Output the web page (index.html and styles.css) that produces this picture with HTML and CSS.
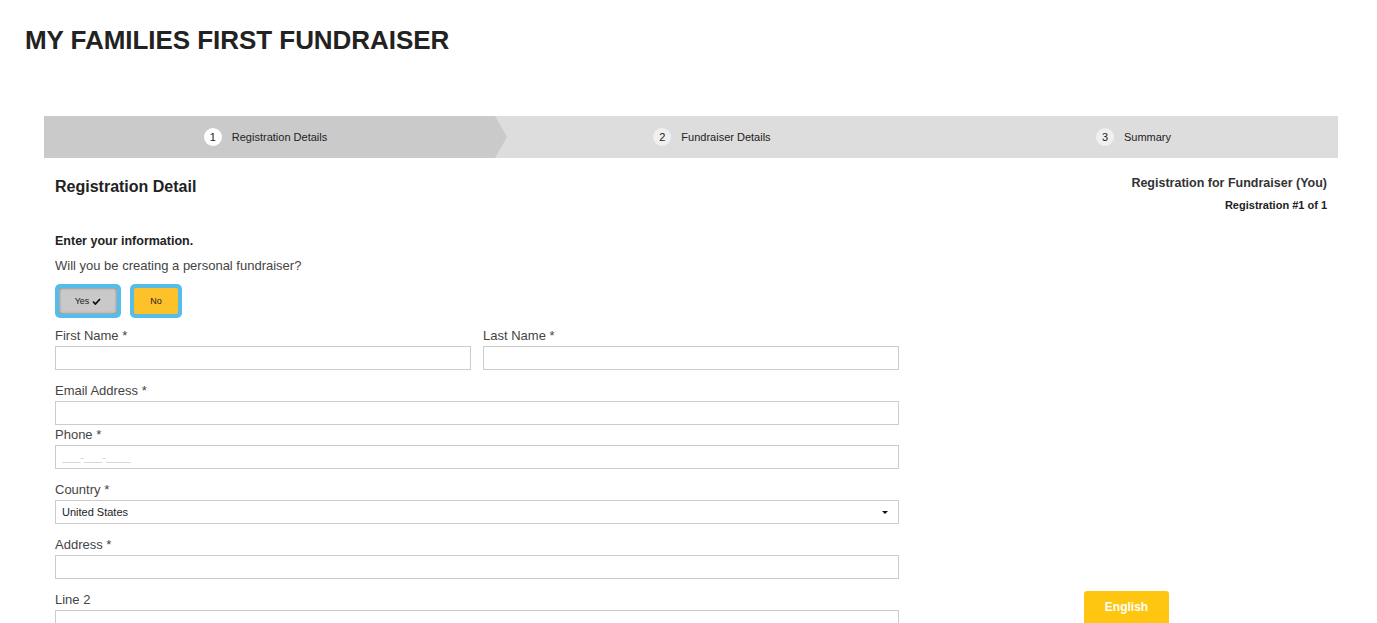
FILE: index.html
```html
<!DOCTYPE html>
<html lang="en">
<head>
    <meta charset="UTF-8">
    <meta name="viewport" content="width=device-width, initial-scale=1.0">
    <title>My Families First Fundraiser</title>
    <link rel="stylesheet" href="styles.css">
</head>
<body>
    <h1 class="page-title">MY FAMILIES FIRST FUNDRAISER</h1>

    <div class="wizard">
        <div class="steps">
            <div class="step active"><span class="step-num">1</span>Registration Details</div>
            <div class="step"><span class="step-num">2</span>Fundraiser Details</div>
            <div class="step"><span class="step-num">3</span>Summary</div>
        </div>

        <div class="panel">
            <div class="panel-head">
                <h2>Registration Detail</h2>
                <div class="reg-info">
                    <div class="reg-for">Registration for Fundraiser (You)</div>
                    <div class="reg-count">Registration #1 of 1</div>
                </div>
            </div>

            <div class="form">
                <div class="intro">Enter your information.</div>
                <div class="question">Will you be creating a personal fundraiser?</div>
                <div class="choice">
                    <button type="button" class="choice-btn yes"><span>Yes <svg width="9" height="7" viewBox="0 0 9 7"><path d="M1 3.5 L3.4 6 L8 1" fill="none" stroke="#111" stroke-width="1.8"/></svg></span></button>
                    <button type="button" class="choice-btn no"><span>No</span></button>
                </div>

                <div class="row">
                    <div class="field">
                        <label>First Name *</label>
                        <input type="text">
                    </div>
                    <div class="field">
                        <label>Last Name *</label>
                        <input type="text">
                    </div>
                </div>
                <div class="field tight">
                    <label>Email Address *</label>
                    <input type="text">
                </div>
                <div class="field">
                    <label>Phone *</label>
                    <input type="text" placeholder="___-___-____">
                </div>
                <div class="field">
                    <label>Country *</label>
                    <div class="select">United States<span class="caret"></span></div>
                </div>
                <div class="field">
                    <label>Address *</label>
                    <input type="text">
                </div>
                <div class="field">
                    <label>Line 2</label>
                    <input type="text">
                </div>
            </div>
        </div>
    </div>

    <button class="lang-btn">English</button>
</body>
</html>
```

FILE: styles.css
```css
body {
    font-family: 'Liberation Sans', Arial, sans-serif;
    margin: 0;
    padding: 0;
    background-color: #ffffff;
    color: #333333;
}
.page-title {
    font-size: 26px;
    font-weight: bold;
    color: #222222;
    margin: 0;
    padding: 25px 0 0 25px;
    line-height: 30px;
    letter-spacing: -0.05px;
}
.wizard {
    margin: 61px 39px 0 44px;
}
.steps {
    display: grid;
    grid-template-columns: 451px 434px 1fr;
    height: 42px;
    background-color: #dddddd;
    font-size: 11px;
    color: #222222;
}
.step {
    display: flex;
    align-items: center;
    justify-content: center;
    padding-bottom: 1px;
}
.step.active {
    position: relative;
    background-color: #cacaca;
    padding-right: 8px;
}
.step.active::after {
    content: "";
    position: absolute;
    top: 0;
    right: -12px;
    border-top: 21px solid transparent;
    border-bottom: 21px solid transparent;
    border-left: 12px solid #cacaca;
}
.step-num {
    display: inline-flex;
    align-items: center;
    justify-content: center;
    width: 18px;
    height: 18px;
    border-radius: 50%;
    background-color: #f0f0f0;
    margin-right: 10px;
}
.step.active .step-num {
    background-color: #ffffff;
}
.panel {
    padding: 0 11px;
}
.panel-head {
    display: flex;
    justify-content: space-between;
    align-items: flex-start;
    padding-top: 17px;
}
.panel-head h2 {
    font-size: 16px;
    font-weight: bold;
    margin: 2px 0 0 0;
    color: #222222;
    line-height: 20px;
}
.reg-info {
    text-align: right;
}
.reg-for {
    font-size: 12.5px;
    font-weight: bold;
    color: #333333;
    line-height: 16px;
}
.reg-count {
    font-size: 11px;
    font-weight: bold;
    color: #222222;
    margin-top: 7px;
    line-height: 14px;
}
.form {
    width: 844px;
    margin-top: 20px;
}
.intro {
    font-size: 12.5px;
    font-weight: bold;
    color: #222222;
    line-height: 18px;
}
.question {
    font-size: 13px;
    color: #444444;
    margin-top: 7px;
    line-height: 18px;
}
.choice {
    display: flex;
    gap: 9px;
    margin-top: 9px;
}
.choice-btn {
    padding: 4px;
    border: none;
    border-radius: 5px;
    background-color: #56bdea;
    cursor: pointer;
    font-family: inherit;
}
.choice-btn span {
    display: flex;
    align-items: center;
    justify-content: center;
    gap: 3px;
    height: 26px;
    border-radius: 2px;
    font-size: 9px;
    color: #222222;
}
.choice-btn.yes span {
    width: 58px;
    background-color: #c9c9c9;
    box-shadow: inset 0 0 3px rgba(0, 0, 0, 0.45);
}
.choice-btn.no span {
    width: 44px;
    background-color: #fdc12a;
}
.row {
    display: flex;
    gap: 12px;
    margin-top: 8px;
}
.row .field {
    flex: 1;
}
.field {
    margin-bottom: 11px;
}
.field.tight {
    margin-bottom: 0;
}
.field label {
    display: block;
    font-size: 13px;
    line-height: 20px;
    color: #444444;
}
.field input, .select {
    display: block;
    width: 100%;
    height: 24px;
    box-sizing: border-box;
    border: 1px solid #cccccc;
    padding: 0 6px;
    font-family: inherit;
    font-size: 11px;
    color: #222222;
    background-color: #ffffff;
}
.field input::placeholder {
    color: #cfcfcf;
}
.select {
    display: flex;
    align-items: center;
    justify-content: space-between;
}
.caret {
    border-left: 3px solid transparent;
    border-right: 3px solid transparent;
    border-top: 3px solid #111111;
    margin-right: 4px;
}
.lang-btn {
    position: fixed;
    left: 1084px;
    bottom: -10px;
    width: 85px;
    height: 42px;
    padding: 0 0 10px 0;
    border: none;
    border-radius: 3px 3px 0 0;
    background-color: #fec511;
    color: #ffffff;
    font-family: inherit;
    font-size: 12px;
    font-weight: bold;
    cursor: pointer;
}
```
